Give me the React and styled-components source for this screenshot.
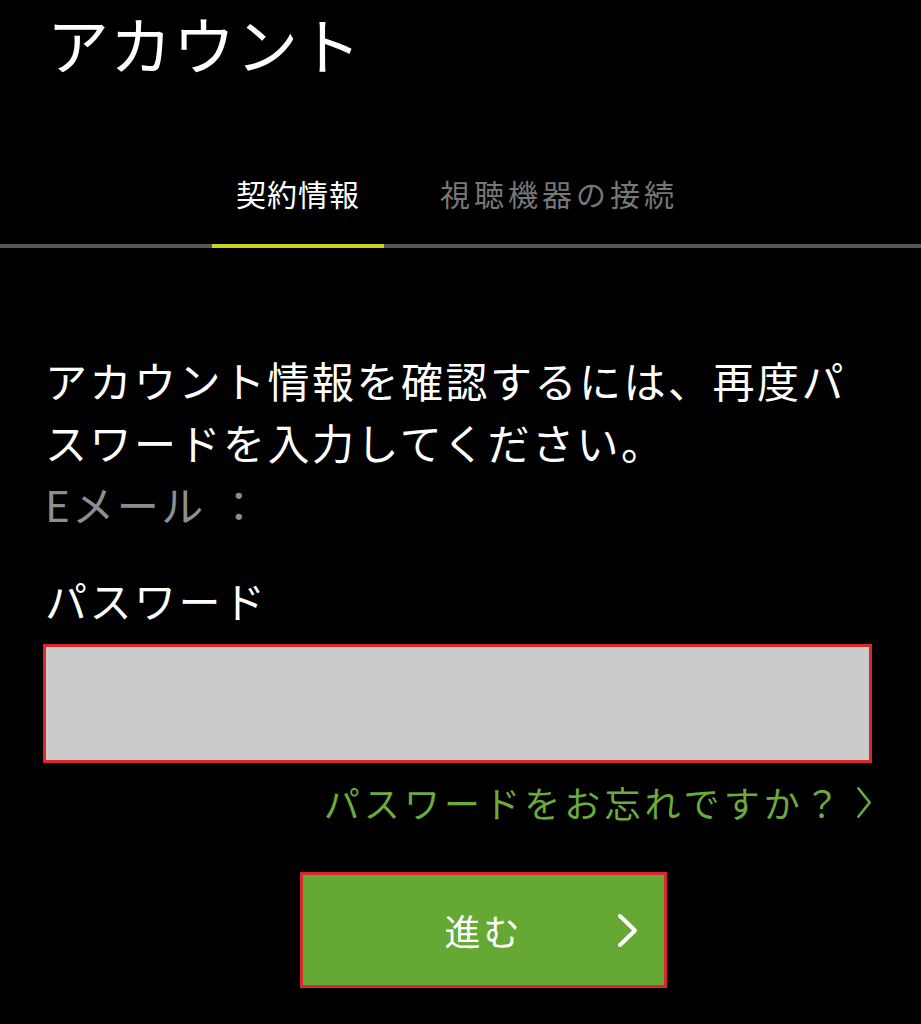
import React, { useState } from 'react';
import styled, { createGlobalStyle } from 'styled-components';

const GlobalStyle = createGlobalStyle`
  html, body {
    margin: 0;
    padding: 0;
    background: #000;
  }
  body {
    font-family: "Noto Sans CJK JP", "Noto Sans", sans-serif;
    color: #fff;
  }
`;

const Page = styled.div`
  min-height: 1024px;
  background: #000;
  padding-top: 12px;
`;

const Title = styled.h1`
  margin: 0 0 0 47px;
  font-size: 62px;
  line-height: 62px;
  font-weight: 400;
  letter-spacing: 1px;
`;

const TabBar = styled.nav`
  display: flex;
  gap: 32px;
  margin-top: 104px;
  padding-left: 212px;
  box-shadow: inset 0 -4px 0 #555;
`;

const Tab = styled.button`
  background: none;
  border: 0;
  border-bottom: 4px solid ${p => (p.$active ? '#c9d41f' : 'transparent')};
  padding: 0 24px 36px;
  margin: 0;
  font-family: inherit;
  font-size: 30px;
  line-height: 30px;
  letter-spacing: ${p => (p.$active ? '1px' : '4px')};
  color: ${p => (p.$active ? '#fff' : '#777')};
  cursor: pointer;
`;

const Content = styled.section`
  padding: 0 49px 0 43px;
`;

const Message = styled.p`
  width: 825px;
  margin: 101px 0 0 2px;
  font-size: 42px;
  line-height: 62px;
  letter-spacing: 2.5px;
`;

const EmailRow = styled.div`
  margin-left: 2px;
  font-size: 42px;
  line-height: 62px;
  letter-spacing: 2.5px;
  color: #8e8e8e;
`;

const Label = styled.label`
  display: block;
  margin: 34px 0 0 2px;
  font-size: 42px;
  line-height: 62px;
  letter-spacing: 2.5px;
`;

const Input = styled.input`
  display: block;
  box-sizing: border-box;
  width: 100%;
  height: 119px;
  margin-top: 13px;
  border: 3px solid #d8272d;
  background: #cbcbcb;
  font-size: 36px;
  padding: 0 20px;
  outline: none;
`;

const ForgotRow = styled.div`
  display: flex;
  justify-content: flex-end;
  margin-top: 17px;
`;

const ForgotLink = styled.a`
  display: flex;
  align-items: center;
  font-size: 36px;
  line-height: 44px;
  letter-spacing: 4.1px;
  color: #6aab3c;
  text-decoration: none;
  cursor: pointer;

  svg {
    margin-left: 12px;
  }
`;

const SubmitButton = styled.button`
  display: grid;
  grid-template-columns: 1fr auto 1fr;
  align-items: center;
  box-sizing: border-box;
  width: 367px;
  height: 116px;
  margin: 48px 0 0 257px;
  padding: 0 26px;
  border: 3px solid #d8272d;
  background: #66a834;
  color: #fff;
  font-family: inherit;
  font-size: 36px;
  letter-spacing: 3px;
  cursor: pointer;

  span {
    grid-column: 2;
  }
  svg {
    grid-column: 3;
    justify-self: end;
  }
`;

const Chevron = ({ width, height, stroke, strokeWidth }) => (
  <svg width={width} height={height} viewBox={`0 0 ${width} ${height}`} fill="none">
    <polyline
      points={`${strokeWidth / 2 + 1},${strokeWidth / 2 + 1} ${width - strokeWidth / 2 - 1},${height / 2} ${strokeWidth / 2 + 1},${height - strokeWidth / 2 - 1}`}
      stroke={stroke}
      strokeWidth={strokeWidth}
      strokeLinecap="round"
      strokeLinejoin="round"
    />
  </svg>
);

const tabs = ['契約情報', '視聴機器の接続'];

const App = () => {
  const [activeTab, setActiveTab] = useState(0);
  const [password, setPassword] = useState('');

  return (
    <Page>
      <GlobalStyle />
      <Title>アカウント</Title>
      <TabBar>
        {tabs.map((tab, index) => (
          <Tab key={tab} $active={activeTab === index} onClick={() => setActiveTab(index)}>
            {tab}
          </Tab>
        ))}
      </TabBar>
      <Content>
        <Message>アカウント情報を確認するには、再度パスワードを入力してください。</Message>
        <EmailRow>Eメール ：</EmailRow>
        <Label htmlFor="password">パスワード</Label>
        <Input
          id="password"
          type="password"
          value={password}
          onChange={e => setPassword(e.target.value)}
        />
        <ForgotRow>
          <ForgotLink>
            パスワードをお忘れですか？
            <Chevron width={16} height={33} stroke="#6aab3c" strokeWidth={2.6} />
          </ForgotLink>
        </ForgotRow>
        <SubmitButton type="button">
          <span>進む</span>
          <Chevron width={21} height={35} stroke="#fff" strokeWidth={4} />
        </SubmitButton>
      </Content>
    </Page>
  );
};

export default App;
